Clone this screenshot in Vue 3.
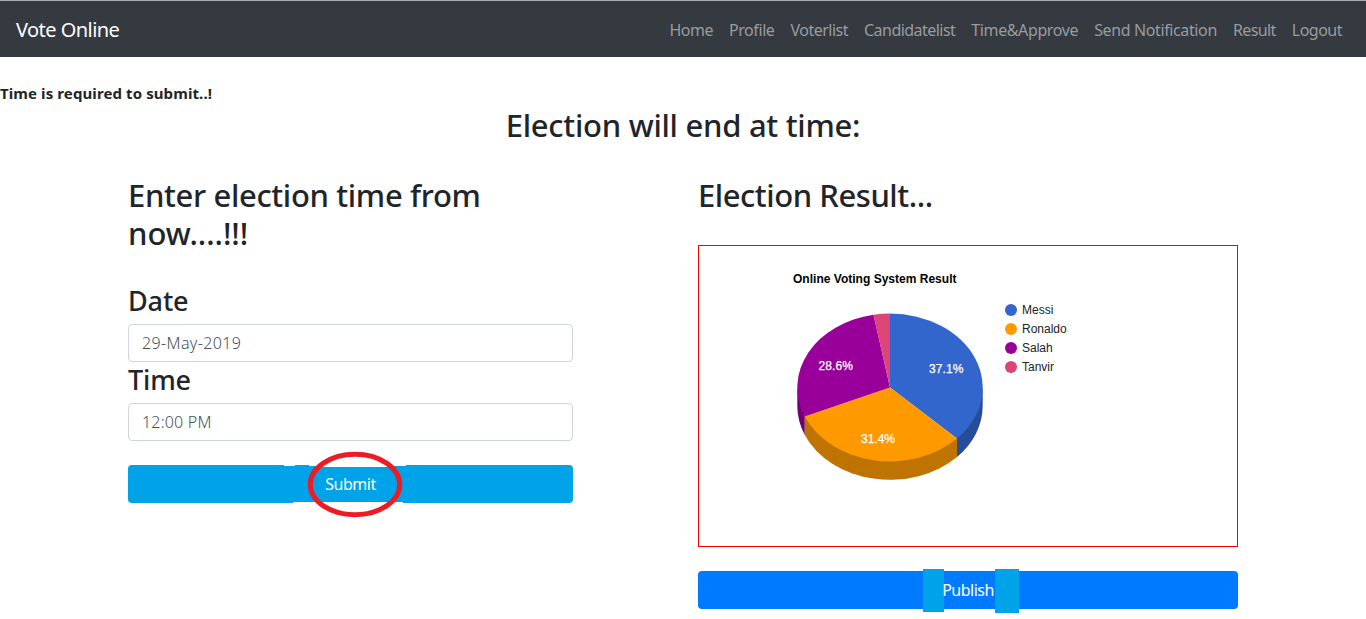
<script setup>
const links = [
  { label: 'Home', key: 'home' },
  { label: 'Profile', key: 'profile' },
  { label: 'Voterlist', key: 'voterlist' },
  { label: 'Candidatelist', key: 'candidatelist' },
  { label: 'Time&Approve', key: 'time' },
  { label: 'Send Notification', key: 'send' },
  { label: 'Result', key: 'result' },
  { label: 'Logout', key: 'logout' },
]
</script>

<template>
  <div class="page">
    <nav class="navbar">
      <a class="brand">Vote Online</a>
      <ul class="links">
        <li v-for="l in links" :key="l.key"><a :class="l.key">{{ l.label }}</a></li>
      </ul>
    </nav>

    <p class="message"><b>Time is required to submit..!</b></p>
    <h2 class="deadline"><span>Election will end at time:</span></h2>

    <main class="columns">
      <section class="left">
        <h2 class="entry">Enter election time from <span class="now">now....!!!</span></h2>
        <form class="form" @submit.prevent>
          <h3>Date</h3>
          <input class="control date" type="text" value="29-May-2019">
          <h3 class="time-label">Time</h3>
          <input class="control clock" type="text" value="12:00 PM">
          <button class="btn submit" type="submit">
            <span>Submit</span>
            <svg class="marks" width="445" height="68" viewBox="0 0 445 68">
              <g fill="#fff">
                <rect x="156" y="15" width="11" height="1" />
                <rect x="181" y="15" width="97" height="1" />
                <rect x="189" y="16" width="77" height="1" />
                <rect x="165" y="52" width="110" height="1" />
              </g>
              <ellipse cx="227" cy="34.5" rx="44.7" ry="30.2" fill="none" stroke="#ed1c24" stroke-width="5" />
            </svg>
          </button>
        </form>
      </section>

      <section class="right">
        <h2 class="result-title">Election Result...</h2>
        <div class="chart">
          <svg width="538" height="300" viewBox="699 246 538 300">
            <text class="title" x="793" y="283" textLength="163.5">Online Voting System Result</text>
            <path fill="#264d99" d="M982.7 387.5V405.8A92.7 74 0 0 1 957 457V438.6Z" />
            <path fill="#730073" d="M797.3 387.5V405.8A92.7 74 0 0 0 804.8 435V416.6Z" />
            <path fill="#bf7300" d="M957 438.6V456.9A92.7 74 0 0 1 804.8 434.9V416.6Z" />
            <path fill="#3366cc" d="M890 387.5V313.5A92.7 74 0 0 1 957 438.6Z" />
            <path fill="#ff9900" d="M890 387.5L957 438.6A92.7 74 0 0 1 804.8 416.6Z" />
            <path fill="#990099" d="M890 387.5L804.8 416.6A92.7 74 0 0 1 873.5 314.7Z" />
            <path fill="#dd4477" d="M890 387.5L873.5 314.7A92.7 74 0 0 1 890 313.5Z" />
            <g class="pct">
              <text x="929" y="373" textLength="34.5">37.1%</text>
              <text x="861" y="443" textLength="34">31.4%</text>
              <text x="818.5" y="370" textLength="34.5">28.6%</text>
            </g>
            <g>
              <circle cx="1011" cy="310" r="6" fill="#3366cc" />
              <circle cx="1011" cy="329" r="6" fill="#ff9900" />
              <circle cx="1011" cy="348" r="6" fill="#990099" />
              <circle cx="1011" cy="367" r="6" fill="#dd4477" />
            </g>
            <g class="legend">
              <text x="1022" y="314">Messi</text>
              <text x="1022" y="333">Ronaldo</text>
              <text x="1022" y="352">Salah</text>
              <text x="1022" y="371">Tanvir</text>
            </g>
          </svg>
        </div>
        <button class="btn publish" type="button">
          <span>Publish</span>
          <i class="patch first"></i>
          <i class="patch second"></i>
        </button>
      </section>
    </main>
  </div>
</template>

<style>
body { background: #fff; overflow: hidden; }
</style>

<style scoped>
.page {
  height: 619px;
  overflow: hidden;
  color: #212529;
  font: 400 16px/24px "Noto Sans", "Open Sans", sans-serif;
}
.navbar {
  box-sizing: border-box;
  height: 57px;
  border-top: 1px solid #a9abae;
  background: #343a40;
  padding: 2px 24px 0 16px;
  display: flex;
  align-items: center;
  justify-content: space-between;
}
.brand { color: #fff; font-size: 20px; letter-spacing: -0.55px; }
.links { display: flex; gap: 16px; list-style: none; margin: 0; padding: 0; }
.links a { color: #999c9f; letter-spacing: -0.5px; white-space: nowrap; }
.links .profile { letter-spacing: -0.42px; }
.links .time, .links .send { letter-spacing: -0.38px; }
.links .candidatelist { letter-spacing: -0.54px; }
.links .result { letter-spacing: -0.6px; }
.message { margin: 24px 0 0; font-size: 15px; letter-spacing: 0.1px; }
h2, h3 { margin: 0; font-weight: 500; }
h2 { font-size: 31px; line-height: 38px; letter-spacing: -0.27px; }
h3 { font-size: 27px; line-height: 34px; letter-spacing: -0.15px; }
.deadline { margin-top: 1px; text-align: center; }
.columns { display: flex; gap: 125px; padding: 32px 128px 0; }
.left { width: 445px; }
.right { width: 540px; }
.entry { letter-spacing: -0.34px; }
.now { display: block; letter-spacing: -0.05px; }
.result-title { letter-spacing: -0.45px; }
.form { display: flex; flex-direction: column; padding-top: 32px; }
.control {
  box-sizing: border-box;
  width: 100%;
  height: 38px;
  margin: 6px 0 0;
  padding: 6px 13px;
  border: 1px solid #ced4da;
  border-radius: 4px;
  color: #495057;
  background: #fff;
  font: 350 16px/24px "Noto Sans", "Open Sans", sans-serif;
  outline: none;
}
.date { letter-spacing: 0.38px; }
.clock { letter-spacing: 0.2px; }
.time-label { margin-top: 1px; }
.btn {
  position: relative;
  display: block;
  width: 100%;
  height: 38px;
  margin: 24px 0 0;
  padding: 0;
  border: 0;
  border-radius: 4px;
  color: #fff;
  font: 400 16px/38px "Noto Sans", "Open Sans", sans-serif;
}
.btn span { position: relative; z-index: 1; letter-spacing: -0.5px; }
.submit { background: #00a2e8; }
.marks { position: absolute; left: 0; top: -15px; }
.chart {
  box-sizing: border-box;
  height: 302px;
  margin-top: 31px;
  border: 1px solid #f00;
}
.chart svg { display: block; font: 12px "Liberation Sans", Arial, sans-serif; }
.title { font-weight: bold; fill: #000; }
.pct { fill: #fff; stroke: #fff; stroke-width: 0.25px; }
.legend { fill: #222; }
.publish { background: #007bff; }
.patch { position: absolute; top: -2px; background: #00a2e8; }
.first { left: 225px; width: 21px; height: 43px; }
.second { left: 297px; width: 24px; height: 44px; }
</style>
